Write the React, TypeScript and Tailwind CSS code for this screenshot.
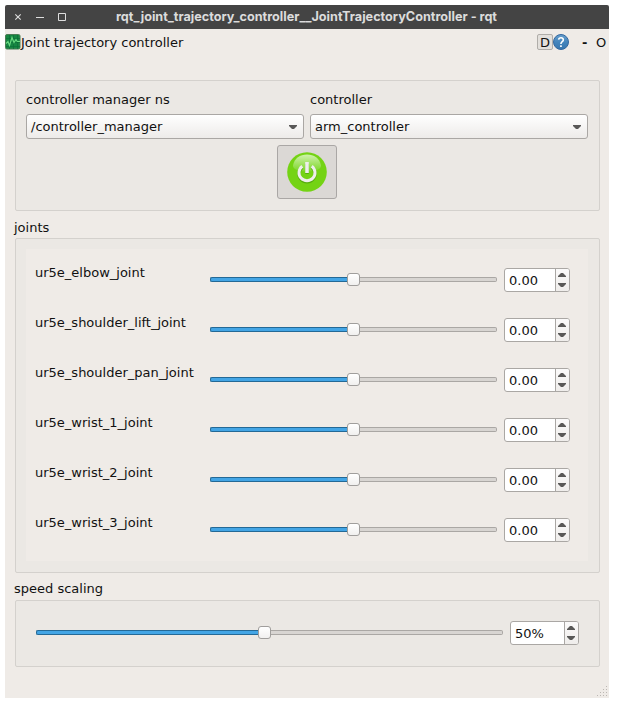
import React from "react";

const joints = [
  "ur5e_elbow_joint",
  "ur5e_shoulder_lift_joint",
  "ur5e_shoulder_pan_joint",
  "ur5e_wrist_1_joint",
  "ur5e_wrist_2_joint",
  "ur5e_wrist_3_joint",
];

function TitleBar() {
  return (
    <header className="flex h-6 items-center rounded-t-[2px] bg-[#444444]">
      <svg className="h-6 w-[72px] shrink-0" viewBox="0 0 72 24" fill="none" stroke="#dedede">
        <path d="M10.3 9.3l5.4 5.4M15.7 9.3l-5.4 5.4" strokeWidth="1.1" />
        <path d="M31 12.5h8M53.5 8.5h7v7h-7z" />
      </svg>
      <h1 className="ml-[39px] w-[381px] whitespace-nowrap font-['Inter',sans-serif] text-[12.67px] font-bold leading-6 text-[#dcdcdc]">
        rqt_joint_trajectory_controller__JointTrajectoryController - rqt
      </h1>
    </header>
  );
}

function PlotIcon() {
  return (
    <svg className="size-4" viewBox="0 0 16 16">
      <rect x="0.5" y="0.5" width="14.5" height="14.500" rx="1.5" fill="#168642" stroke="#4b7d55" />
      <path d="M1 4.5h14M1 8.5h14M1 12.5h14M4.5 1v14M8.5 1v14M12.5 1v14" stroke="#0c6c35" strokeWidth="0.6" />
      <path d="M1 9.500l2-2 1.500 4L7 3.500l2 5 2-3 1.300 2H15" fill="none" stroke="#6bdb82" strokeWidth="1.1" />
    </svg>
  );
}

function HelpIcon() {
  return (
    <svg className="size-4" viewBox="0 0 16 16">
      <defs>
        <linearGradient id="help" x1="0" y1="0" x2="0" y2="1">
          <stop stopColor="#699fcc" />
          <stop offset="0.5" stopColor="#4485bd" />
          <stop offset="1" stopColor="#3776ae" />
        </linearGradient>
      </defs>
      <circle cx="8" cy="8" r="7.5" fill="url(#help)" stroke="#3468a0" />
      <path d="M5.600 5.700C6 3 10.500 3 10.300 6c0 1.700-2.400 1.800-2.400 4" fill="none" stroke="#fff" strokeWidth="1.600" />
      <rect x="7.100" y="11.300" width="1.700" height="1.700" fill="#fff" />
    </svg>
  );
}

function DockBar() {
  return (
    <div className="flex h-[26px] items-center">
      <PlotIcon />
      <span className="pt-px">Joint trajectory controller</span>
      <button className="ml-auto flex h-4 w-4 items-center justify-center rounded-[2px] border border-[#b0ada9] bg-[#e3e0dc] pt-px leading-none">D</button>
      <HelpIcon />
      <span className="ml-[13px] w-[6px] pt-px font-bold">-</span>
      <span className="ml-[8px] w-[13px] pt-px">O</span>
    </div>
  );
}

function Combo({ label, value }: { label: string; value: string }) {
  return (
    <div className="w-[278px]">
      <div className="h-[33px] pt-[11px] leading-4">{label}</div>
      <div className="flex h-[25px] items-center rounded-[3px] border border-[#aaa7a4] bg-linear-to-b from-white to-[#edebe9] pl-[4px] pr-[6px]">
        <span className="grow">{value}</span>
        <svg className="h-[4px] w-2" viewBox="0 0 8 4" fill="#595857">
          <path d="M0 0h8v1L5 4H3L0 1z" />
        </svg>
      </div>
    </div>
  );
}

function PowerButton() {
  return (
    <button className="ml-[251px] mt-[6px] flex h-[54px] w-[60px] items-center justify-center rounded-[3px] border border-[#aaa7a5] bg-[#dbd8d5]">
      <svg className="size-10" viewBox="0 0 40 40" fill="none">
        <defs>
          <linearGradient id="shine" x1="0" y1="0" x2="0" y2="1">
            <stop stopColor="#cff2ac" />
            <stop offset="1" stopColor="#7bd625" />
          </linearGradient>
        </defs>
        <circle cx="20" cy="20" r="19.800" fill="#74d314" />
        <path d="M6 13.500C7.500 6 13 2.500 20 2.500S32.500 6 34 13.500c0 4-6 6-14 6s-14-2-14-6z" fill="url(#shine)" />
        <path d="M15.300 14.200a8 8 0 1 0 9.400 0M20 11v10" stroke="#57ac10" strokeWidth="3.500" transform="translate(0 1)" />
        <path d="M15.300 14.200a8 8 0 1 0 9.400 0" stroke="#eeeeec" strokeWidth="3" />
        <path d="M20 10v11" stroke="#eeeeec" strokeWidth="3.600" />
      </svg>
    </button>
  );
}

function Slider({ className, fill }: { className: string; fill: string }) {
  return (
    <div className={`flex h-[13px] shrink-0 items-center ${className}`}>
      <div className={`h-[5px] rounded-l-[2px] border border-r-0 border-[#246996] bg-[#43a5e5] ${fill}`} />
      <div className="h-[13px] w-[13px] shrink-0 rounded-[3px] border border-[#a09e9c] bg-linear-to-b from-white to-[#f1f0ef]" />
      <div className="h-[5px] grow rounded-r-[2px] border border-l-0 border-[#aaa7a4] bg-[#d8d5d2]" />
    </div>
  );
}

function SpinBox({ value, className }: { value: string; className: string }) {
  return (
    <div className={`flex h-[24px] shrink-0 overflow-hidden rounded-[3px] border border-[#aaa7a4] bg-white ${className}`}>
      <span className="grow pl-[4px] leading-[24px]">{value}</span>
      <div className="flex w-[14px] items-center border-l border-[#aaa7a4] bg-linear-to-b from-[#fbfafa] to-[#efedeb] pl-[2px]">
        <svg className="h-[14px] w-2 shrink-0" viewBox="0 0 8 14" fill="#595857">
          <path d="M0 4V3l3-3h2l3 3v1zM0 10h8v1l-3 3H3l-3-3z" />
        </svg>
      </div>
    </div>
  );
}

export default function App() {
  return (
    <div className="h-[707px] w-[618px] bg-white pl-[5px] pt-[5px] font-['DejaVu_Sans',sans-serif] text-[13px] leading-4 text-[#111]">
      <main className="flex h-[693px] w-[604px] flex-col rounded-t-[2px] bg-[#efebe7]">
        <TitleBar />
        <DockBar />
        <section className="ml-[10px] mt-[25px] h-[131px] w-[585px] rounded-[2px] border border-[#d4d1cd] bg-[#ebe8e4] px-[10px]">
          <div className="flex gap-[6px]">
            <Combo label="controller manager ns" value="/controller_manager" />
            <Combo label="controller" value="arm_controller" />
          </div>
          <PowerButton />
        </section>
        <h2 className="ml-[9px] h-[27px] pt-[9px]">joints</h2>
        <section className="ml-[10px] h-[335px] w-[585px] rounded-[2px] border border-[#d4d1cd] bg-[#ebe8e4] p-[10px]">
          <div className="flex h-[312px] w-[562px] flex-col bg-[#efebe7] pl-[9px] pt-[6px]">
            {joints.map((name) => (
              <div key={name} className="flex h-[50px] items-center">
                <span className="mb-[15px] w-[175px] shrink-0">{name}</span>
                <Slider className="mb-px w-[287px]" fill="w-[137px]" />
                <SpinBox className="ml-[7px] w-[66px]" value="0.00" />
              </div>
            ))}
          </div>
        </section>
        <h2 className="ml-[9px] h-[27px] pt-[8px]">speed scaling</h2>
        <section className="ml-[10px] flex h-[67px] w-[585px] items-center rounded-[2px] border border-[#d4d1cd] bg-[#ebe8e4] pb-px pl-[20px]">
          <Slider className="mb-px w-[467px]" fill="w-[222px]" />
          <SpinBox className="ml-[7px] w-[69px]" value="50%" />
        </section>
        <svg className="ml-auto mr-[1px] mt-auto h-[14px] w-[12px]" viewBox="0 0 12 14" fill="#bbb7b3">
          <path d="M10 2h1v1h-1zM7 5h1v1H7zM10 5h1v1h-1zM4 8h1v1H4zM7 8h1v1H7zM10 8h1v1h-1zM1 11h1v1H1zM4 11h1v1H4zM7 11h1v1H7zM10 11h1v1h-1z" />
        </svg>
      </main>
    </div>
  );
}
